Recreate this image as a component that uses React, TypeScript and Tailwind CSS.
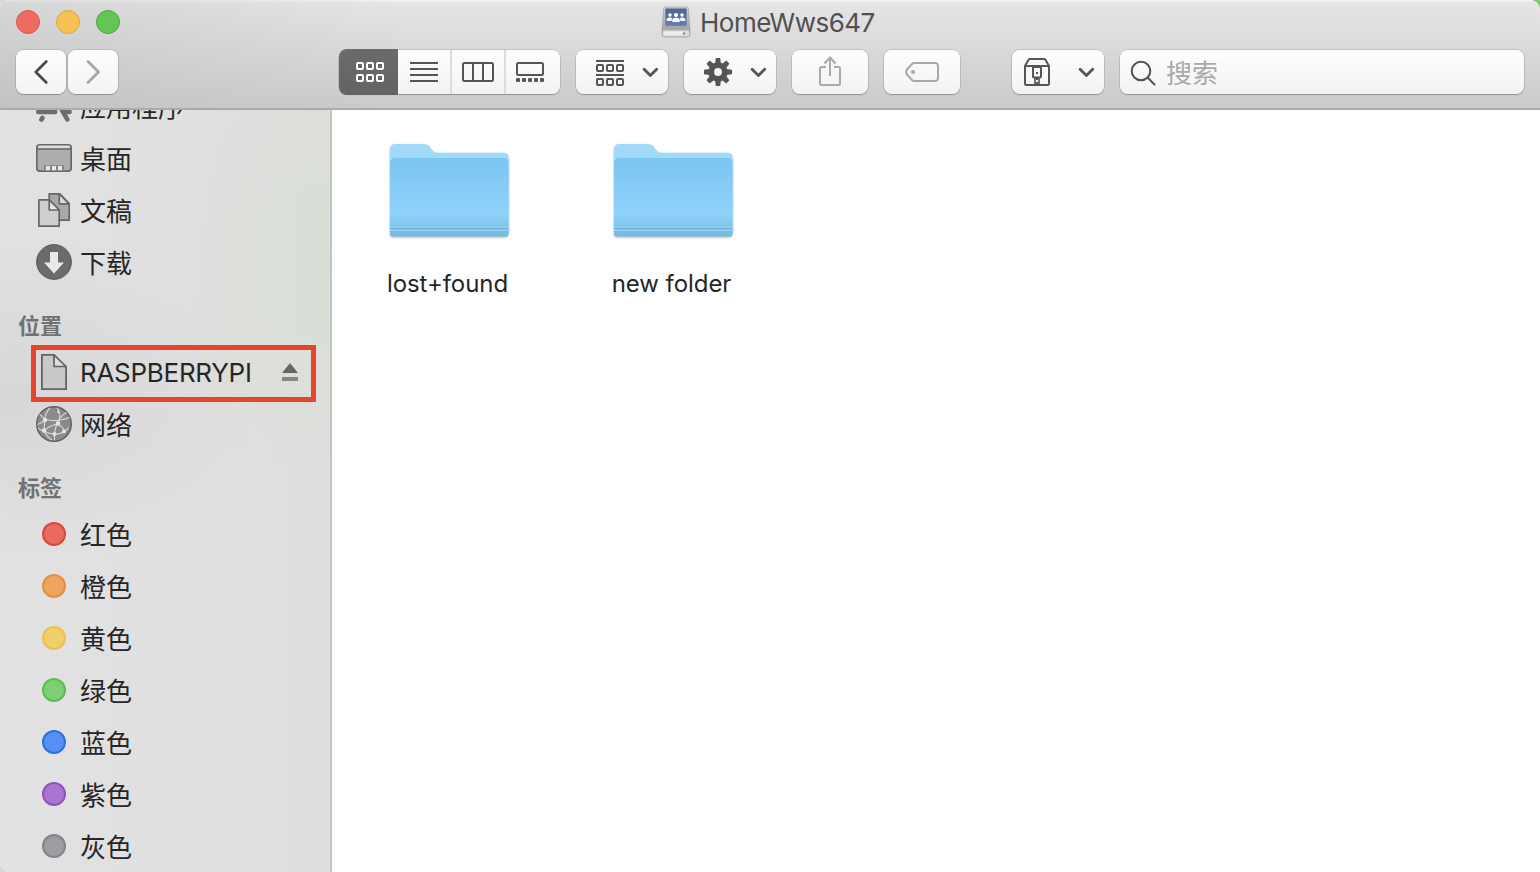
import type { ReactNode } from "react";

const BUTTON =
  "flex h-[44px] shrink-0 rounded-[8px] bg-linear-to-b from-[#fdfdfd] to-[#f3f3f3] shadow-[0_0_0_1px_rgba(0,0,0,0.1),0_1px_1px_0_rgba(0,0,0,0.2)]";

function Chevron({ x }: { x: number }) {
  return (
    <path
      d={`M${x - 6.3} 69.2 L${x} 75.6 L${x + 6.3} 69.2`}
      fill="none"
      stroke="#555"
      strokeWidth="2.8"
      strokeLinecap="round"
      strokeLinejoin="round"
    />
  );
}

function Squares({ x, y, color }: { x: number; y: number; color: string }) {
  return (
    <g fill="none" stroke={color} strokeWidth="2">
      {[0, 10, 20].map((dx) => (
        <rect key={dx} x={x + dx + 1} y={y + 1} width="6" height="6" rx="1" />
      ))}
    </g>
  );
}

function ViewSwitch() {
  return (
    <div className={`${BUTTON} ml-[221px] w-[221px]`}>
      <button className="-mt-px h-[46px] w-[59px] rounded-l-[8px] bg-linear-to-b from-[#6b6b6b] to-[#636363]">
        <svg className="block" width="59" height="46" viewBox="339 49 59 46">
          <Squares x={356} y={62} color="#fff" />
          <Squares x={356} y={74} color="#fff" />
        </svg>
      </button>
      <button className="w-[54px] border-r-2 border-[#dcdcdc]">
        <svg className="block" width="52" height="44" viewBox="398 50 52 44">
          <path d="M410 63h28M410 69h28M410 75h28M410 81h28" stroke="#555" strokeWidth="2" />
        </svg>
      </button>
      <button className="w-[54px] border-r-2 border-[#dcdcdc]">
        <svg className="block" width="52" height="44" viewBox="452 50 52 44">
          <rect x="463" y="63" width="30" height="18" rx="1.5" fill="none" stroke="#555" strokeWidth="2" />
          <path d="M473 63v18M483 63v18" stroke="#555" strokeWidth="2" />
        </svg>
      </button>
      <button className="w-[54px]">
        <svg className="block" width="54" height="44" viewBox="506 50 54 44">
          <rect x="517" y="63" width="26" height="12" rx="1.5" fill="none" stroke="#555" strokeWidth="2" />
          {[516, 522, 528, 534, 540].map((x) => (
            <rect key={x} x={x} y="78" width="4" height="4" rx="1" fill="#555" />
          ))}
        </svg>
      </button>
    </div>
  );
}

function DiskIcon() {
  return (
    <svg className="-mt-[3px]" width="30" height="32" viewBox="661 6 30 32">
      <defs>
        <linearGradient id="metal" x1="0" y1="0" x2="0" y2="1">
          <stop offset="0" stopColor="#cfd0d2" />
          <stop offset="0.7" stopColor="#a3a5a8" />
          <stop offset="1" stopColor="#b9babc" />
        </linearGradient>
        <linearGradient id="screen" x1="0" y1="0" x2="0" y2="1">
          <stop offset="0" stopColor="#4a6591" />
          <stop offset="1" stopColor="#6683ad" />
        </linearGradient>
      </defs>
      <path d="M665 7h22q1.2 0 1.4 1.5L690 30v5q0 2-2 2h-24q-2 0-2-2v-5L663.6 8.5q.2-1.5 1.4-1.5z" fill="url(#metal)" stroke="#96989b" strokeWidth=".6" />
      <rect x="665.3" y="8.6" width="21.4" height="17.4" rx="1" fill="url(#screen)" />
      <rect x="662.8" y="30.5" width="26.4" height="5.7" rx="1.5" fill="#dcdddd" />
      <rect x="664" y="31.5" width="20" height="3" rx="1" fill="#eee" />
      <circle cx="684" cy="33.5" r="1.2" fill="#8c8c8c" />
      <g fill="#fff">
        <circle cx="670" cy="15" r="1.7" />
        <circle cx="682" cy="15" r="1.7" />
        <path d="M666.800 21v-1.800q0-1.700 3.200-1.700 1.800 0 2 1.200L671.500 21zM680.500 21l-.5-2.300q.2-1.200 2-1.200 3.200 0 3.200 1.700V21z" />
        <circle cx="676" cy="15" r="2.1" />
        <path d="M672.300 22v-2q0-2.200 3.700-2.200t3.700 2.200v2z" />
      </g>
    </svg>
  );
}

function Toolbar() {
  return (
    <div className="flex h-[50px] pt-[3px] pl-4">
      <button className={`${BUTTON} w-[50px]`}>
        <svg width="50" height="44" viewBox="16 50 50 44">
          <path d="M46.3 61.5L35.8 72l10.5 10.5" fill="none" stroke="#4c4c4c" strokeWidth="2.7" strokeLinecap="round" strokeLinejoin="round" />
        </svg>
      </button>
      <button className={`${BUTTON} ml-[2px] w-[50px]`}>
        <svg width="50" height="44" viewBox="68 50 50 44">
          <path d="M88 61.5L98.5 72 88 82.5" fill="none" stroke="#a6a6a6" strokeWidth="2.7" strokeLinecap="round" strokeLinejoin="round" />
        </svg>
      </button>
      <ViewSwitch />
      <button className={`${BUTTON} ml-4 w-[92px]`}>
        <svg width="92" height="44" viewBox="576 50 92 44">
          <path d="M596 61h28M596 75h28" stroke="#555" strokeWidth="2" />
          <Squares x={596} y={64} color="#555" />
          <Squares x={596} y={78} color="#555" />
          <Chevron x={650.4} />
        </svg>
      </button>
      <button className={`${BUTTON} ml-4 w-[92px]`}>
        <svg width="92" height="44" viewBox="684 50 92 44">
          <g fill="#555">
            {[0, 45, 90, 135].map((a) => (
              <path key={a} d="M715.8 58h4.4l.7 6v16l-.7 6h-4.4l-.7-6V64z" transform={`rotate(${a} 718 72)`} />
            ))}
            <circle cx="718" cy="72" r="9.7" />
          </g>
          <circle cx="718" cy="72" r="3.9" fill="#f9f9f9" />
          <Chevron x={758.4} />
        </svg>
      </button>
      <button className={`${BUTTON} ml-4 w-[76px]`}>
        <svg width="76" height="44" viewBox="792 50 76 44">
          <g fill="none" stroke="#a9a9a9" strokeWidth="2">
            <path d="M826 67h-4.500q-1.500 0-1.500 1.500v15q0 1.500 1.500 1.500h17q1.500 0 1.500-1.500v-15q0-1.500-1.500-1.500H834" />
            <path d="M830 76V57.500M824.500 63.500L830 57.500l5.500 6" />
          </g>
        </svg>
      </button>
      <button className={`${BUTTON} ml-4 w-[76px]`}>
        <svg width="76" height="44" viewBox="884 50 76 44">
          <path d="M914.500 63H935q3 0 3 3v12q0 3-3 3h-20.500q-1.500 0-2.500-1l-5-5.500q-2-2.500 0-5l5-5.500q1-1 2.500-1z" fill="none" stroke="#a9a9a9" strokeWidth="2" />
          <circle cx="913" cy="72" r="2.1" fill="#a9a9a9" />
        </svg>
      </button>
      <button className={`${BUTTON} ml-[52px] w-[92px]`}>
        <svg width="92" height="44" viewBox="1012 50 92 44">
          <g fill="none" stroke="#555" strokeWidth="2" strokeLinejoin="round">
            <path d="M1025 66l3.500-6.200q.5-.8 1.500-.8h14q1 0 1.500.8L1049 66v17.500q0 1.500-1.500 1.500h-21q-1.500 0-1.500-1.500z" />
            <path d="M1025 66h24" />
            <rect x="1033" y="67" width="8" height="10.500" rx="1" />
            <path d="M1035 77.500V85M1039 77.500V85" strokeWidth="1.600" />
          </g>
          <path d="M1036 72h2v2h-2zM1036 78h2v2h-2zM1036 82h2v2h-2z" fill="#555" />
          <Chevron x={1086.4} />
        </svg>
      </button>
      <label className={`${BUTTON} ml-4 w-[404px] items-center`}>
        <svg width="46" height="44" viewBox="1120 50 46 44">
          <g fill="none" stroke="#505050" strokeWidth="2" strokeLinecap="round">
            <circle cx="1141" cy="71" r="9.3" />
            <path d="M1147.8 77.8l6.800 6.800" />
          </g>
        </svg>
        <span className="pt-[3px] text-[26px] leading-[41px] text-[#a9a9a9]">搜索</span>
      </label>
    </div>
  );
}

function Row({ icon, children }: { icon: ReactNode; children: ReactNode }) {
  return (
    <li className="flex h-[52px] items-center pl-9">
      <span className="-mt-[2px] flex w-9 shrink-0 justify-center">{icon}</span>
      <span className="ml-2 pt-[2px] text-[26px] leading-[50px] whitespace-nowrap text-[#262626]">{children}</span>
    </li>
  );
}

function SectionTitle({ children }: { children: ReactNode }) {
  return <h2 className="h-[58px] pt-[21px] pl-[18px] text-[22px] leading-8 font-bold text-[#717171]">{children}</h2>;
}

const AppsIcon = () => (
  <svg width="36" height="36" viewBox="36 88 36 36">
    <g stroke="#6c6c6c" strokeWidth="4.6" strokeLinecap="round" fill="none">
      <path d="M38.2 112h17M65 112h4.600M56 92L46 109M42.400 118l-1 1.600M54 96l13.300 23.400" />
    </g>
  </svg>
);

const DesktopIcon = () => (
  <svg width="36" height="36" viewBox="36 140 36 36">
    <rect x="36.800" y="144.800" width="34.400" height="26.400" rx="3" fill="#adadad" stroke="#686868" strokeWidth="1.700" />
    <path d="M38 146.800q0-1.200 1.500-1.200h29q1.500 0 1.500 1.200v1.400H38z" fill="#dcdcdc" />
    <path d="M37 149h34" stroke="#686868" strokeWidth="1.600" />
    <path d="M44 171v-5.800h20v5.800z" fill="#858585" />
    <path d="M46 166h4v4.200h-4zM52 166h4v4.200h-4zM58 166h4v4.200h-4z" fill="#e8e8e8" />
  </svg>
);

const DocumentsIcon = () => (
  <svg width="36" height="36" viewBox="36 192 36 36">
    <g stroke="#666" strokeWidth="1.700" strokeLinejoin="round">
      <path d="M49.200 193.900h10.600l9.400 9.600v16.700h-20z" fill="#a9a9a9" />
      <path d="M59.300 194v9.800h9.800z" fill="#dedede" />
      <path d="M38.900 199.900h10.400l9.900 10v16.200H38.900z" fill="#cecece" />
      <path d="M49.200 200v10h10z" fill="#e6e6e6" />
    </g>
  </svg>
);

const DownloadsIcon = () => (
  <svg width="36" height="36" viewBox="36 244 36 36">
    <circle cx="54" cy="262" r="17.4" fill="#6b6b6b" stroke="#5c5c5c" />
    <path d="M50 252h8v10.500h6L54 273.500 44 262.500h6z" fill="#e9e9e9" />
  </svg>
);

const FileIcon = () => (
  <svg className="-mt-[2px]" width="36" height="38" viewBox="36 353 36 38">
    <path d="M41.900 354.900h12L66.100 367v22.100H41.900z" fill="#c9c9c9" stroke="#636363" strokeWidth="1.800" />
    <path d="M54 355v11.500h12z" fill="#dcdcdc" stroke="#636363" strokeWidth="1.700" strokeLinejoin="round" />
  </svg>
);

const NetworkIcon = () => (
  <svg width="36" height="36" viewBox="36 406 36 36">
    <circle cx="54" cy="424" r="17.3" fill="#8a8a8a" stroke="#5f5f5f" strokeWidth="1.400" />
    <g fill="none" stroke="#d6d6d6" strokeWidth="1.200">
      <path d="M50 408Q45 413 44.700 420T44 430.500Q47 437 52 440" />
      <path d="M39.500 414q3 4 6 5.500 10 3 24-2" />
      <path d="M57 408q5 5 1 15.500" />
      <path d="M66.500 412.500q-7 4-9.500 11T54.500 434v6.500" />
      <path d="M57.500 424q-9 2-13.500 7-4-1-6-3M44 431q4 2.500 10.500 3 6 .3 10-2.500l4-3.500" />
      <path d="M37.500 424.500q4-1 7.500-4.500M57.500 424q5 2 7 7.500" />
    </g>
    <g fill="#e4e4e4">
      <circle cx="45" cy="420" r="2.200" />
      <circle cx="58" cy="423.500" r="2.200" />
      <circle cx="44" cy="430.500" r="2.200" />
      <circle cx="54.500" cy="434" r="1.900" />
      <circle cx="64" cy="431.500" r="1.900" />
      <circle cx="58.500" cy="412" r="1.200" />
    </g>
  </svg>
);

const TAGS = [
  { name: "红色", style: "bg-[#ea6a5e] border-[#d9483b]" },
  { name: "橙色", style: "bg-[#eda45c] border-[#e48f3e]" },
  { name: "黄色", style: "bg-[#f1cf68] border-[#e9c14f]" },
  { name: "绿色", style: "bg-[#7dcf74] border-[#5dbb54]" },
  { name: "蓝色", style: "bg-[#568ff5] border-[#2f70e0]" },
  { name: "紫色", style: "bg-[#aa73d2] border-[#9152bf]" },
  { name: "灰色", style: "bg-[#9c9ca1] border-[#838388]" },
];

function Sidebar() {
  return (
    <aside className="w-[332px] shrink-0 overflow-hidden border-r-2 border-[#c3c3c3] bg-[radial-gradient(ellipse_170px_230px_at_100%_20%,rgba(212,222,210,0.65),transparent),radial-gradient(ellipse_260px_170px_at_0%_38%,rgba(204,204,206,0.5),transparent),linear-gradient(90deg,#e2e2e3,#dfdedd)]">
      <ul className="-mt-[29px]">
        <Row icon={<AppsIcon />}>应用程序</Row>
        <Row icon={<DesktopIcon />}>桌面</Row>
        <Row icon={<DocumentsIcon />}>文稿</Row>
        <Row icon={<DownloadsIcon />}>下载</Row>
      </ul>
      <SectionTitle>位置</SectionTitle>
      <ul>
        <li className="relative flex h-[52px] items-center pl-9">
          <FileIcon />
          <span className="ml-2 w-[202px] text-[26px] leading-[52px] tracking-[-0.28px] text-[#262626]">RASPBERRYPI</span>
          <svg className="-mt-[3px]" width="16" height="20" viewBox="282 361 16 20">
            <path d="M290 362l8 10h-16z" fill="#666" />
            <path d="M282 376h16v4h-16z" fill="#858585" />
          </svg>
          <span className="absolute -top-[2.500px] left-[30.5px] h-[57px] w-[285px] border-[5px] border-[#e8442b]" />
        </li>
        <Row icon={<NetworkIcon />}>网络</Row>
      </ul>
      <SectionTitle>标签</SectionTitle>
      <ul>
        {TAGS.map((t) => (
          <Row key={t.name} icon={<span className={`size-6 rounded-full border-2 ${t.style}`} />}>
            {t.name}
          </Row>
        ))}
      </ul>
    </aside>
  );
}

function Folder({ name }: { name: string }) {
  return (
    <figure className="flex w-56 flex-col items-center">
      <svg width="128" height="104" viewBox="385 138 128 104" className="drop-shadow-[0_1px_1px_rgba(0,0,0,0.3)]">
        <defs>
          <linearGradient id="front" x1="0" y1="0" x2="0" y2="1">
            <stop offset="0" stopColor="#7bc5f2" />
            <stop offset="0.7" stopColor="#8fd2f9" />
            <stop offset="0.86" stopColor="#83c6ec" />
            <stop offset="1" stopColor="#7abde5" />
          </linearGradient>
        </defs>
        <path d="M390 232v-82.500q0-5.500 5.500-5.500h29q2.500 0 4.200 1.800l4.200 5.200q1.300 1.700 3.600 1.700h67q5 0 5 5V232z" fill="#a1d9f8" />
        <path d="M390 163q0-5 5-5h108.500q5 0 5 5v70q0 3.500-3.500 3.500H393.500q-3.500 0-3.500-3.500z" fill="url(#front)" />
        <path d="M390 227h118.500M390 230.500h118.500" stroke="#97d3f5" strokeWidth="1" />
        <path d="M390 228.500h118.500M390 232h118.500M390.500 235h117.500" stroke="#6fb4de" strokeWidth="1" />
      </svg>
      <figcaption className="mt-[25px] mr-[3px] text-[24px] leading-[34px] tracking-[-0.06px] text-[#262626]">{name}</figcaption>
    </figure>
  );
}

export default function App() {
  return (
    <div className="h-[872px] w-[1540px] overflow-hidden bg-[linear-gradient(90deg,#d8d8d8_50%,#84cb70_50%)] font-['Inter','Noto_Sans_CJK_SC',sans-serif]">
      <div className="flex h-full flex-col overflow-hidden rounded-t-[10px] rounded-bl-[10px] bg-white">
        <header className="h-[110px] shrink-0 border-b-2 border-[#ababab] bg-[linear-gradient(100deg,rgba(170,170,170,0.25),rgba(190,190,190,0.2)_14%,transparent_26%),linear-gradient(180deg,#f4f4f4_0,#e5e5e5_3px,#cacaca)]">
          <div className="flex h-[47px] items-center">
            <div className="-mt-[3px] flex w-[645px] gap-4 pl-4">
              <span className="size-6 rounded-full border border-[#d9564b] bg-[#ee6b60]" />
              <span className="size-6 rounded-full border border-[#dba543] bg-[#f6c251]" />
              <span className="size-6 rounded-full border border-[#4ba63e] bg-[#62c554]" />
            </div>
            <div className="flex items-center pl-4">
              <DiskIcon />
              <h1 className="-mt-[2px] ml-[9px] text-[26px] leading-[45px] tracking-[-0.5px] text-[#505050]">HomeWws647</h1>
            </div>
          </div>
          <Toolbar />
        </header>
        <div className="flex min-h-0 grow">
          <Sidebar />
          <main className="flex grow bg-white pt-7 pl-[5px]">
            <Folder name="lost+found" />
            <Folder name="new folder" />
          </main>
        </div>
      </div>
    </div>
  );
}
